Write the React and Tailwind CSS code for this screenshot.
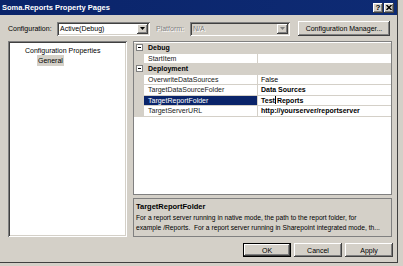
import React from "react";

// Win classic bevels
const raised =
  "shadow-[inset_-1px_-1px_#404040,inset_1px_1px_#ffffff,inset_-2px_-2px_#808080,inset_2px_2px_#d4d0c8]";
const sunken =
  "shadow-[inset_1px_1px_#808080,inset_-1px_-1px_#ffffff,inset_2px_2px_#404040,inset_-2px_-2px_#d4d0c8]";

const rows = [
  { type: "cat", name: "Debug" },
  { name: "StartItem", value: "" },
  { type: "cat", name: "Deployment" },
  { name: "OverwriteDataSources", value: "False" },
  { name: "TargetDataSourceFolder", value: "Data Sources", bold: true },
  { name: "TargetReportFolder", value: "Test Reports", bold: true, selected: true },
  { name: "TargetServerURL", value: "http://yourserver/reportserver", bold: true },
];

const DropArrow = ({ disabled }) => (
  <div className={`w-[11px] h-[10px] bg-[#d4d0c8] flex items-center justify-center ${raised}`}>
    <svg width="5" height="3" viewBox="0 0 5 3">
      <path d="M0 0h5L2.5 3z" fill={disabled ? "#808080" : "#000"} />
    </svg>
  </div>
);

const MinusBox = () => (
  <div className="w-[7px] h-[7px] border border-[#808080] bg-white flex items-center justify-center">
    <div className="w-[3px] h-px bg-black" />
  </div>
);

const GridRow = ({ row }) => {
  if (row.type === "cat") {
    return (
      <div className="h-[10.5px] flex items-center bg-[#d4d0c8] border-b border-[#d4d0c8]">
        <div className="w-[10px] flex justify-center">
          <MinusBox />
        </div>
        <div className="pl-[4px] font-bold leading-none">{row.name}</div>
      </div>
    );
  }
  return (
    <div className="h-[10.5px] flex">
      <div className="w-[10px] bg-[#d4d0c8]" />
      <div
        className={`w-[114px] flex items-center pl-[4px] border-b border-r border-[#d4d0c8] leading-none ${
          row.selected ? "bg-[#0a246a] text-white" : "bg-white text-[#202020]"
        }`}
      >
        {row.name}
      </div>
      <div
        className={`flex-1 flex items-center pl-[3px] bg-white border-b border-[#d4d0c8] leading-none ${
          row.bold ? "font-bold" : ""
        }`}
      >
        {row.selected ? (
          <>
            Test
            <span className="inline-block w-px h-[8px] bg-black mx-[0.5px]" />
            Reports
          </>
        ) : (
          row.value
        )}
      </div>
    </div>
  );
};

export default function App() {
  return (
    <div className="w-[403px] h-[266px] overflow-hidden bg-[#d4d0c8] text-black text-[7px] font-['Liberation_Sans',Arial,sans-serif]">
      <div className="w-[398px] h-[263px] flex flex-col border-r border-b border-[#404040] bg-[#d4d0c8]">
        {/* title bar */}
        <div className="h-[15px] flex items-center justify-between bg-gradient-to-r from-[#0a246a] to-[#0e2b74] pl-[2px] pr-[3px]">
          <span className="text-white font-bold text-[7.5px] leading-none">Soma.Reports Property Pages</span>
          <div className="flex gap-[1px]">
            <div className={`w-[10px] h-[10px] bg-[#d4d0c8] flex items-center justify-center font-bold text-[8px] leading-none ${raised}`}>
              ?
            </div>
            <div className={`w-[10px] h-[10px] bg-[#d4d0c8] flex items-center justify-center ${raised}`}>
              <svg width="6" height="5" viewBox="0 0 6 5">
                <path d="M0.5 0L5.5 5M5.5 0L0.5 5" stroke="#000" strokeWidth="1.4" />
              </svg>
            </div>
          </div>
        </div>

        {/* configuration row */}
        <div className="mt-[6px] h-[15px] flex items-center pl-[8px]">
          <span className="w-[49px] leading-none">Configuration:</span>
          <div className={`w-[93px] h-[14px] bg-white flex items-center justify-between pl-[3px] pr-[2px] ${sunken}`}>
            <span className="leading-none">Active(Debug)</span>
            <DropArrow />
          </div>
          <span className="ml-[6px] w-[34px] text-[#808080] leading-none [text-shadow:1px_1px_#ffffff]">Platform:</span>
          <div className={`w-[100px] h-[14px] bg-[#d4d0c8] flex items-center justify-between pl-[3px] pr-[2px] ${sunken}`}>
            <span className="text-[#808080] leading-none [text-shadow:1px_1px_#ffffff]">N/A</span>
            <DropArrow disabled />
          </div>
          <div className={`ml-[8px] w-[92px] h-[15px] flex items-center justify-center leading-none ${raised}`}>
            Configuration Manager...
          </div>
        </div>

        {/* main area */}
        <div className="mt-[5px] h-[196px] flex pl-[8px]">
          <div className={`w-[119px] bg-white p-[2px] ${sunken}`}>
            <div className="pl-[15px] pt-[4px] leading-none">Configuration Properties</div>
            <div className="pl-[27px] mt-[1px]">
              <span className="inline-block bg-[#d4d0c8] px-[1px] py-[2px] leading-none">General</span>
            </div>
          </div>

          <div className="ml-[6px] w-[259px] flex flex-col">
            <div className="h-[154px] border border-[#808080] bg-white flex flex-col pt-px">
              {rows.map((r, i) => (
                <GridRow key={i} row={r} />
              ))}
            </div>
            <div className="mt-[3px] h-[39px] border border-[#808080] bg-[#d4d0c8] px-[2px] pt-[4px] overflow-hidden">
              <div className="font-bold text-[7.5px] leading-none">TargetReportFolder</div>
              <div className="mt-[2px] leading-[10px] text-[6.7px] whitespace-nowrap">
                For a report server running in native mode, the path to the report folder, for
                <br />
                example /Reports.&nbsp; For a report server running in Sharepoint integrated mode, th...
              </div>
            </div>
          </div>
        </div>

        {/* dialog buttons */}
        <div className="mt-[6px] flex justify-end gap-[3px] pr-[4px]">
          <div className="w-[48px] h-[14px] border border-black">
            <div className={`w-full h-full flex items-center justify-center leading-none ${raised}`}>OK</div>
          </div>
          <div className={`w-[48px] h-[14px] flex items-center justify-center leading-none ${raised}`}>Cancel</div>
          <div className={`w-[48px] h-[14px] flex items-center justify-center leading-none ${raised}`}>Apply</div>
        </div>
      </div>
    </div>
  );
}
